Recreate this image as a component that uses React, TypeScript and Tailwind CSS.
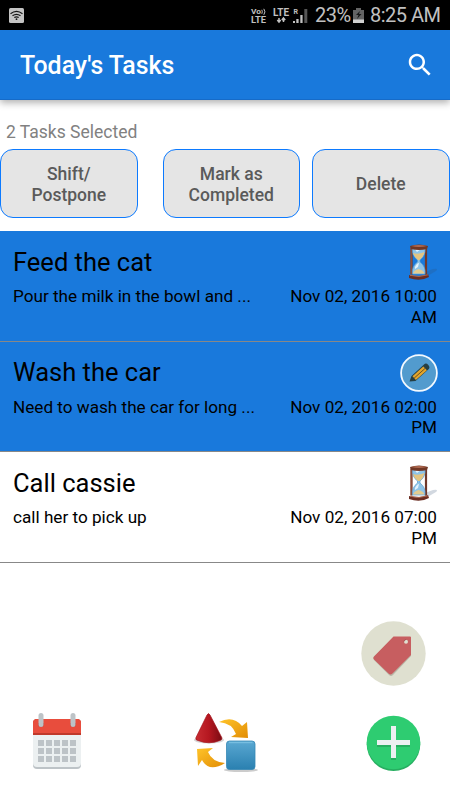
type IconKind = "hourglass" | "pencil";

interface Task {
    title: string;
    description: string;
    due: string;
    icon: IconKind;
    selected: boolean;
}

const tasks: Task[] = [
    { title: "Feed the cat", description: "Pour the milk in the bowl and ...", due: "Nov 02, 2016 10:00 AM", icon: "hourglass", selected: true },
    { title: "Wash the car", description: "Need to wash the car for long ...", due: "Nov 02, 2016 02:00 PM", icon: "pencil", selected: true },
    { title: "Call cassie", description: "call her to pick up", due: "Nov 02, 2016 07:00 PM", icon: "hourglass", selected: false },
];

export default function App() {
    return (
        <div className="flex h-[800px] w-[450px] flex-col overflow-hidden bg-white font-['Roboto',sans-serif] text-black">
            <StatusBar />
            <Header />
            <main className="flex flex-1 flex-col">
                <p className="mt-[22px] ml-[6px] h-[21px] text-[17.5px] leading-[21px] whitespace-nowrap text-[#818181]">2 Tasks Selected</p>
                <div className="mt-[6px] flex">
                    <ActionButton className="mr-[25px]">Shift/<br />Postpone</ActionButton>
                    <ActionButton className="mr-[12px]">Mark as<br />Completed</ActionButton>
                    <ActionButton>Delete</ActionButton>
                </div>
                <ul className="mt-[13px]">
                    {tasks.map((task) => <TaskRow key={task.title} task={task} />)}
                </ul>
                <div className="mt-[58px] mr-[24.5px] flex justify-end">
                    <button aria-label="Tags"><TagIcon /></button>
                </div>
                <nav className="mt-[27px] flex items-start justify-between pr-[29.5px] pl-[31px]">
                    <button aria-label="Calendar"><CalendarIcon /></button>
                    <button aria-label="Categories" className="ml-[3px]"><ShapesIcon /></button>
                    <button aria-label="Add task"><AddIcon /></button>
                </nav>
            </main>
        </div>
    );
}

// ==================== Top bars ====================
function StatusBar() {
    return (
        <div className="flex h-[30px] shrink-0 items-center bg-black text-[#c1c1c1]">
            <svg className="ml-[9px]" width="15" height="15" viewBox="0 0 15 15">
                <rect width="15" height="15" rx="1.5" fill="#c4c4c4" />
                <g fill="none" stroke="#171717" strokeWidth="1.2">
                    <path d="M1.5 5.8Q7.5 1 13.5 5.8" />
                    <path d="M3.5 7.8Q7.5 4.8 11.5 7.8" />
                    <path d="M5.3 9.6Q7.5 8 9.7 9.6" />
                </g>
                <circle cx="7.5" cy="11.2" r=".9" fill="#171717" />
            </svg>
            <svg className="ml-auto" width="60" height="30" viewBox="250 0 60 30" fill="#c1c1c1" fontFamily="Roboto" fontWeight="700">
                <text x="252" y="14.3" fontSize="8" textLength="10" lengthAdjust="spacingAndGlyphs">Vo</text>
                <path d="M262.8 9.8q1 2 0 4M264.8 8.8q2.3 3 0 6" fill="none" stroke="#c1c1c1" />
                <text x="252" y="23" fontSize="8.5" textLength="15" lengthAdjust="spacingAndGlyphs">LTE</text>
                <text x="274" y="16" fontSize="10" textLength="16" lengthAdjust="spacingAndGlyphs">LTE</text>
                <path d="M280 18v4M278.3 20l1.7 2 1.7-2M284.5 22v-4M282.8 20l1.7-2 1.7 2" fill="none" stroke="#c1c1c1" strokeWidth="1.5" />
                <text x="294.5" y="13.5" fontSize="7">R</text>
                <path d="M294 23v-2h2v2zM297.3 23v-4h2.3v4zM301.3 23v-8h2.3v8z" />
                <path d="M305.3 23V9h3v14z" fill="#555" />
            </svg>
            <span className="ml-[6px] w-[36px] text-[20px] leading-[32px] tracking-[-0.5px]">23%</span>
            <svg className="ml-[2px]" width="11" height="15" viewBox="0 0 11 15">
                <path d="M3 0h5v2h3v13H0V2h3z" fill="#646464" />
                <path d="M0 11.5h11V15H0z" fill="#d1d1d1" />
                <path d="M7 3 3 7h2.5L4 11l4.5-5H6z" fill="#171717" />
            </svg>
            <span className="ml-[6px] w-[80px] text-[20px] leading-[32px] tracking-[-0.5px] whitespace-nowrap">8:25 AM</span>
        </div>
    );
}

function Header() {
    return (
        <header className="flex h-[70px] shrink-0 items-center justify-between border-b border-[#166bc8] bg-[#1979dc] pr-[15px] pl-[20px] shadow-[0_3px_7px_rgba(0,0,0,0.3)]">
            <h1 className="mt-[3px] text-[24.9px] leading-[30px] font-medium text-white">Today's Tasks</h1>
            <button aria-label="Search">
                <svg width="30" height="30" viewBox="0 0 24 24" fill="white">
                    <path d="M15.5 14h-.79l-.28-.27C15.41 12.59 16 11.11 16 9.5 16 5.91 13.09 3 9.5 3S3 5.91 3 9.5 5.91 16 9.5 16c1.61 0 3.09-.59 4.23-1.57l.27.28v.79l5 4.99L20.49 19l-4.99-5zm-6 0C7.01 14 5 11.99 5 9.5S7.01 5 9.5 5 14 7.01 14 9.5 11.99 14 9.5 14z" />
                </svg>
            </button>
        </header>
    );
}

function ActionButton({ children, className = "" }: { children: React.ReactNode; className?: string }) {
    return (
        <button className={`h-[69px] w-[137.5px] shrink-0 rounded-[13px] border border-[#0c7aff] bg-[#e5e5e5] pt-[2px] text-[17.5px] leading-[21px] font-medium text-[#5a5a5a] ${className}`}>
            {children}
        </button>
    );
}

// ==================== Task list ====================
function TaskRow({ task }: { task: Task }) {
    return (
        <li className={`h-[110.6px] border-b border-[#888] pr-[13px] pl-[13px] ${task.selected ? "bg-[#1979dc]" : "bg-white"}`}>
            <div className="flex h-[54px] items-start justify-between">
                <h2 className="mt-[13.5px] text-[25.5px] leading-[34px]">{task.title}</h2>
                {task.icon === "hourglass" ? <HourglassIcon /> : <PencilIcon />}
            </div>
            <div className="flex justify-between text-[17.15px] leading-[20.3px]">
                <p className="mt-[1.3px] whitespace-nowrap">{task.description}</p>
                <p className="mt-[1.3px] w-[154px] text-right">{task.due}</p>
            </div>
        </li>
    );
}

// ==================== Icons ====================
function HourglassIcon() {
    return (
        <svg className="mt-[11px] -mr-px shrink-0" width="40" height="40" viewBox="0 0 40 40">
            <path d="m26 36 12-7q3-3-3-2l-8 3z" fill="#344f70" opacity=".22" />
            <path d="M13.500 5.500v27M28 5.500v27" stroke="#70392b" strokeWidth="2.2" />
            <path d="M13.2 5.5v27" stroke="#ad674d" strokeWidth=".7" />
            <path d="M14.500 5.500q-1 8 5 12.500v2q-6 4.500-5 12h12.500q1-7.500-5-12v-2q6-4.500 5-12.500z" fill="#8ec4e8" stroke="#5a9bcc" strokeWidth=".7" />
            <path d="M15 11q5 2 11.500-1-1 5-5 8H20q-4-3-5-7z" fill="#e3c582" />
            <path d="m20.500 27q5 1 6 4.500H15q1-3.500 5.500-4.500z" fill="#e3cc91" />
            <path d="M16.500 7q4-1 6.500 0l-4 3zM17 25q2-4 4-4l-1 4-3 2z" fill="#edf8ff" opacity=".9" />
            <path d="M12 4q9-3 18 0l-1 3q-8 2-16 0z" fill="#703725" />
            <path d="M13 4q8-2 16 0-8 2-16 0z" fill="#b06a50" />
            <path d="M11 33q9 3 19-1l1 3q-9 5-20 1z" fill="#6b2d22" />
            <path d="M12 33.300q9 2.500 18-.5" fill="none" stroke="#ad684e" />
        </svg>
    );
}

function PencilIcon() {
    return (
        <svg className="mt-[12px] -mr-px shrink-0" width="38" height="38" viewBox="0 0 38 38">
            <circle cx="19" cy="19" r="17.9" fill="#529bce" stroke="#f3f9ff" strokeWidth="1.8" />
            <path d="m9.500 27.500 2-5.500L24 10.500q2-2 4.300.5t0 4.500L15.500 27z" fill="#263f43" />
            <path d="m12.500 22.300 10.800-9.800 3.600 3.700-11 9.700z" fill="#e3a52c" />
            <path d="m14.100 24.200 11.200-10" stroke="#5d4820" strokeWidth=".9" />
        </svg>
    );
}

function TagIcon() {
    return (
        <svg width="65" height="65" viewBox="0 0 65 65">
            <circle cx="32.5" cy="32.5" r="32.2" fill="#dfe0d0" />
            <path d="M33 16h17v19L32 54q-2 2-4 0L13 39q-1-1-.5-3z" fill="#b9b8a8" />
            <path d="M32.500 15.500H49q1 0 1 1V34L31.500 52.500q-2 2-4 0L13 38.500q-1.500-1.500 0-3z" fill="#c75e60" />
            <circle cx="45" cy="20.7" r="2" fill="#dfe0d0" />
            <path d="M43 20.500q.3-2 2.300-2" fill="none" stroke="#954646" strokeWidth=".7" />
        </svg>
    );
}

const calendarDays = Array.from({ length: 15 }, (_, i) => ({ x: 7 + (i % 5) * 8, y: 27 + Math.floor(i / 5) * 8 }));

function CalendarIcon() {
    return (
        <svg width="52" height="60" viewBox="0 0 52 60">
            <path d="M2 20h48v32q0 4-4 4H6q-4 0-4-4z" fill="#bdc3c7" />
            <path d="M2 18h48v32q0 4-4 4H6q-4 0-4-4z" fill="#ecf0f1" />
            <path d="M2 22V10q0-4 4-4h40q4 0 4 4v12z" fill="#c0392b" />
            <path d="M2 20V10q0-4 4-4h40q4 0 4 4v10z" fill="#e84d3d" />
            <path d="M7 10v1a3 3 0 0 0 6 0v-1M39 10v1a3 3 0 0 0 6 0v-1" fill="#b93c31" />
            <rect x="7.5" width="5" height="14" rx="2.5" fill="#bdc3c7" />
            <rect x="39.5" width="5" height="14" rx="2.5" fill="#bdc3c7" />
            {calendarDays.map((day) => <rect key={`${day.x}-${day.y}`} x={day.x} y={day.y} width="6" height="6" fill="#bdc3c7" />)}
        </svg>
    );
}

function ShapesIcon() {
    return (
        <svg width="64" height="62" viewBox="0 0 64 62">
            <defs>
                <linearGradient id="cone">
                    <stop stopColor="#c82c32" />
                    <stop offset=".5" stopColor="#b51720" />
                    <stop offset="1" stopColor="#790c13" />
                </linearGradient>
                <linearGradient id="cube" x2="0" y2="1">
                    <stop stopColor="#5aa8d2" />
                    <stop offset="1" stopColor="#2a80b0" />
                </linearGradient>
                <linearGradient id="arrow" x2="1" y2="1">
                    <stop stopColor="#ffc42a" />
                    <stop offset="1" stopColor="#e28d05" />
                </linearGradient>
            </defs>
            <ellipse cx="15" cy="27" rx="15" ry="3.5" fill="#bbb" opacity=".6" />
            <path d="M13 2q1.500-3 3 0l12 23q0 2-2 2.500-11 4.500-22 0-3-.5-2-3z" fill="url(#cone)" stroke="#a3131b" strokeWidth=".7" />
            <path d="M25 9q14-7 23 4l5-4 1 16-17-1 5-3Q38 10 25 9z" fill="url(#arrow)" />
            <path d="m3 36 16-1-5 4q4 10 17 11-16 10-23-3l-4 6z" fill="url(#arrow)" />
            <ellipse cx="47" cy="57" rx="17" ry="2" fill="#999" opacity=".5" />
            <rect x="32.5" y="28" width="28.500" height="28.500" rx="3" fill="url(#cube)" stroke="#3688b5" strokeWidth=".8" />
            <path d="M35 29.500h23.500" fill="none" stroke="#80c5e5" strokeWidth="1.4" opacity=".75" />
        </svg>
    );
}

function AddIcon() {
    return (
        <svg className="mt-[2px]" width="55" height="58" viewBox="0 0 55 58">
            <circle cx="27.5" cy="29.3" r="26.8" fill="#27ae60" />
            <circle cx="27.5" cy="27.5" r="26.8" fill="#2ecc71" />
            <path d="M25 13h5v14h14v5H30v13h-5V32H11v-5h14z" fill="#27ae60" />
            <path d="M25 11h5v14h14v5H30v13h-5V30H11v-5h14z" fill="#ecf0f1" />
        </svg>
    );
}
